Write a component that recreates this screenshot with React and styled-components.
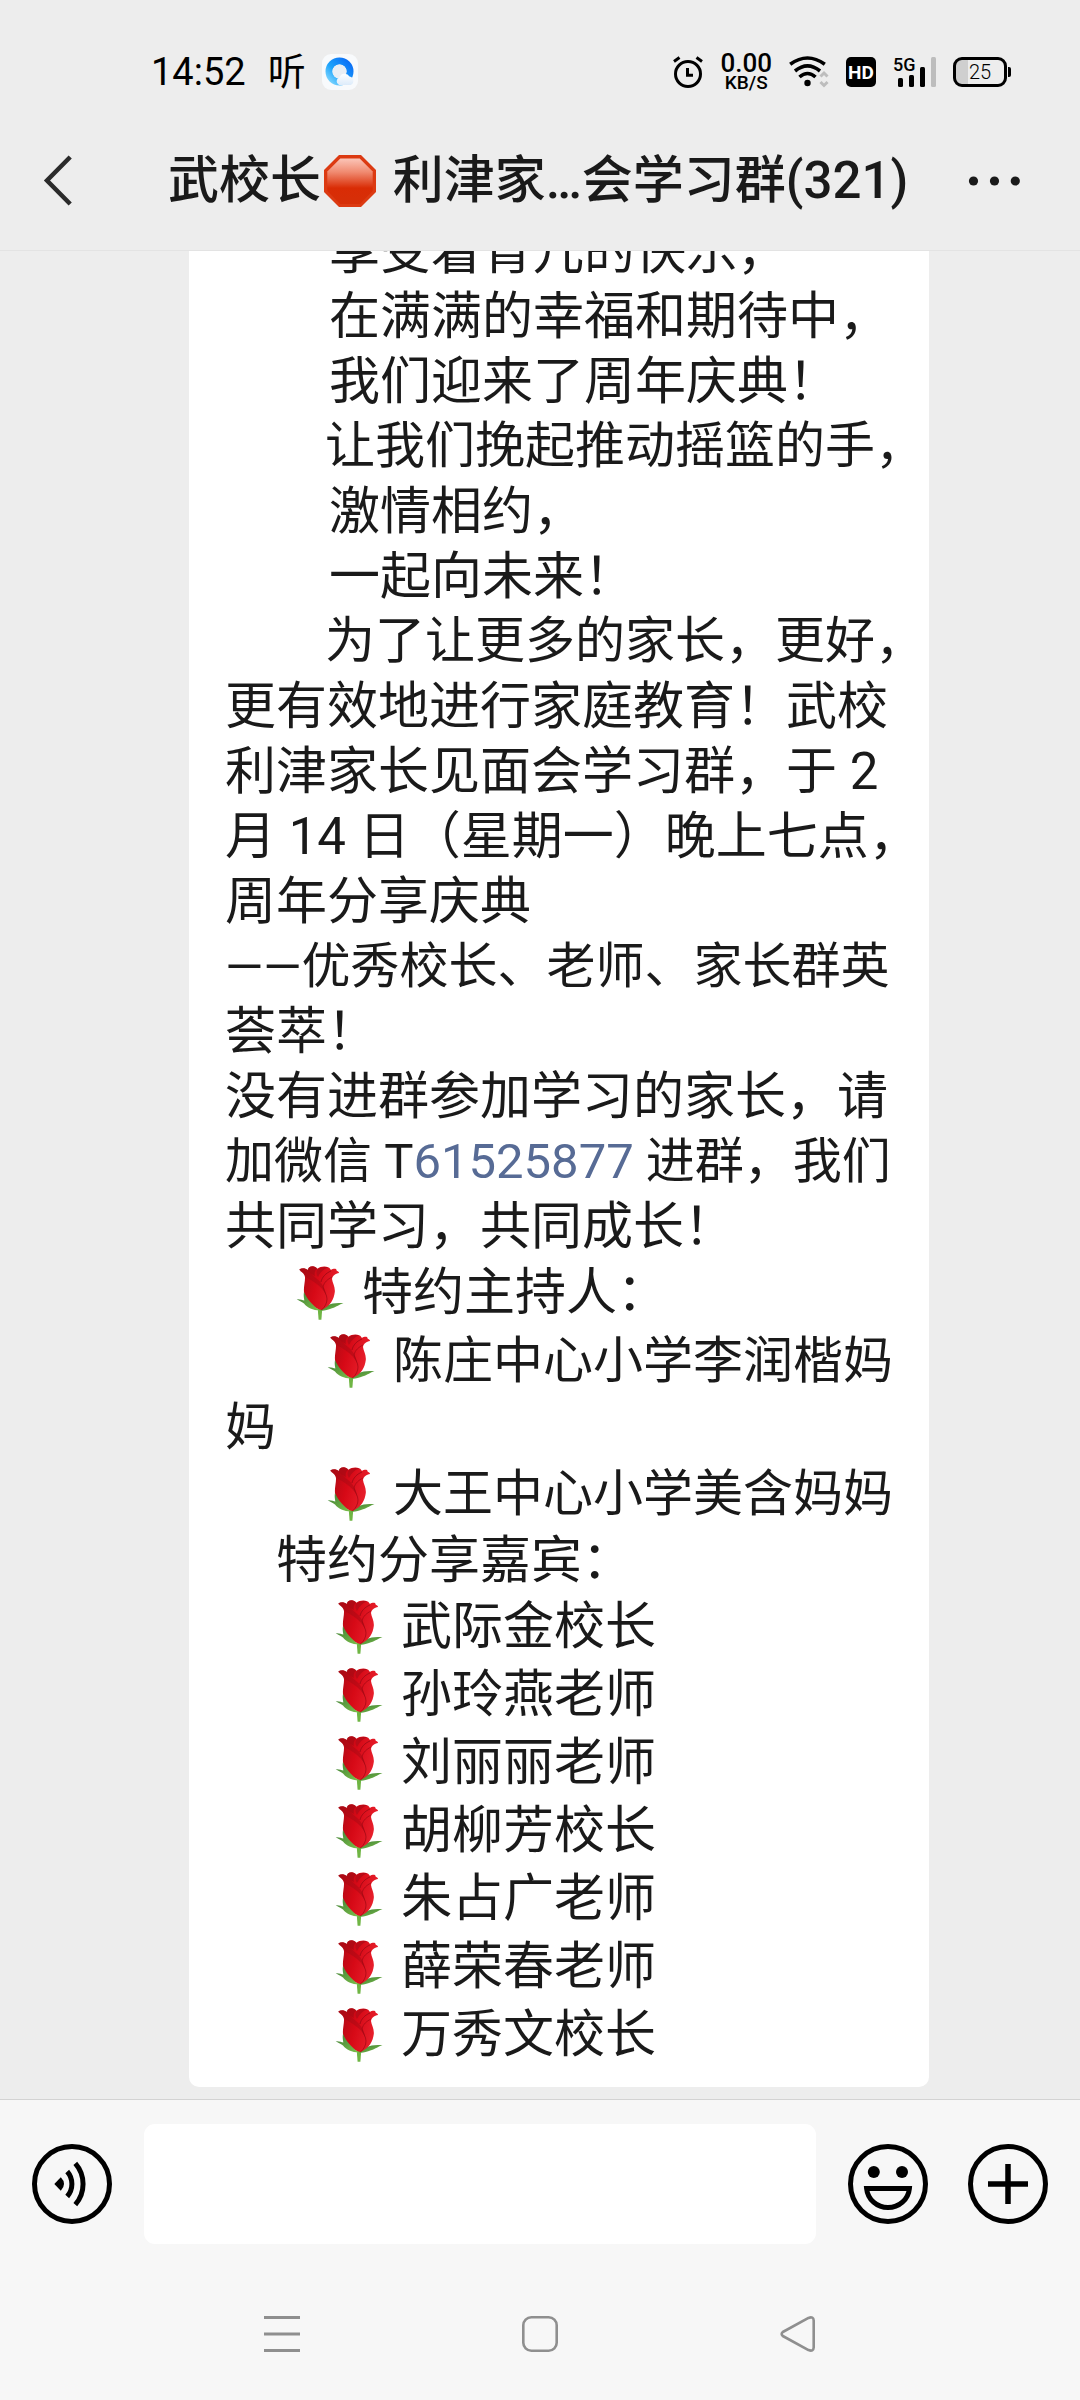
import { useState } from "react"
import styled, { createGlobalStyle } from "styled-components"

const GlobalStyle = createGlobalStyle`
  * {
    box-sizing: border-box;
  }
  body {
    margin: 0;
    background: #ededed;
    color: #1a1a1a;
    font-family: Roboto, "Noto Sans CJK SC", sans-serif;
  }
  button {
    display: flex;
    padding: 0;
    border: none;
    background: none;
    color: inherit;
    cursor: pointer;
  }
  svg {
    display: block;
  }
`

// Page
const Screen = styled.div`
  display: flex;
  flex-direction: column;
  height: 100vh;
`

// Status bar
const StatusBar = styled.div`
  flex: none;
  display: flex;
  justify-content: space-between;
  align-items: center;
  height: 111px;
  padding: 33px 69px 0 151px;
  color: #000;
`
const StatusLeft = styled.div`
  display: flex;
  align-items: center;
  gap: 16px;
`
const StatusRight = styled.div`
  display: flex;
  align-items: center;
  gap: 17px;
`
const Clock = styled.time`
  margin-right: 6px;
  font-size: 38px;
  line-height: 40px;
`
const ListenMark = styled.span`
  font-size: 38px;
  line-height: 40px;
`
const NetSpeed = styled.div`
  display: flex;
  flex-direction: column;
  align-items: center;
  font-weight: 500;
`
const SpeedValue = styled.span`
  font-size: 26px;
  line-height: 22px;
`
const SpeedUnit = styled.span`
  font-size: 19px;
  line-height: 18px;
`
const HdBadge = styled.span`
  display: flex;
  justify-content: center;
  align-items: center;
  width: 30px;
  height: 30px;
  border-radius: 5px;
  background: #000;
  color: #fff;
  font-size: 19px;
  font-weight: 700;
`
const Signal = styled.div`
  position: relative;

  span {
    position: absolute;
    top: 0;
    left: 0;
    font-size: 18px;
    line-height: 16px;
    font-weight: 500;
  }
`
const Battery = styled.div`
  display: flex;
  align-items: center;
  gap: 1px;

  &::after {
    content: '';
    width: 3px;
    height: 10px;
    border-radius: 0 2px 2px 0;
    background: #000;
  }
`
const BatteryBody = styled.div`
  display: flex;
  justify-content: center;
  align-items: center;
  width: 54px;
  height: 30px;
  border: 3px solid #000;
  border-radius: 9px;
  background: linear-gradient(to right, #cfcfcf 25%, transparent 25%);
  font-size: 20px;
  font-weight: 300;
`

// Title bar
const TitleBar = styled.header`
  flex: none;
  display: flex;
  align-items: center;
  height: 140px;
  padding: 0 60px 0 42px;
  border-bottom: 1px solid #e3e3e3;
`
const Title = styled.h1`
  flex: 1;
  display: flex;
  align-items: center;
  margin: 0 0 0 94px;
  font-size: 51px;
  line-height: 60px;
  font-weight: 500;
  white-space: pre;

  svg {
    margin: 0 4px 0 3px;
  }
`

// Messages
const Chat = styled.main`
  flex: 1;
  min-height: 0;
  display: flex;
  flex-direction: column;
  justify-content: flex-end;
  padding: 0 151px 12px 189px;
  overflow: hidden;
`
const Bubble = styled.article`
  flex: none;
  padding: 24px 0 18px 36px;
  border-radius: 10px;
  background: #fff;
`
const textSizes = { normal: 51, snug: 50, tight: 49 }
const Line = styled.p`
  display: flex;
  align-items: center;
  height: 65px;
  margin: 0;
  padding-left: ${(props) => props.$indent || 0}px;
  font-size: ${(props) => textSizes[props.$size || "normal"]}px;
  line-height: 65px;
  white-space: pre;
`
const RoseLine = styled(Line)`
  height: 68px;
  line-height: 68px;

  svg {
    margin-right: 18px;
  }
`
const NumberLink = styled.a`
  color: #576b95;
  text-decoration: none;
`

// Bottom
const Composer = styled.form`
  flex: none;
  display: flex;
  align-items: center;
  gap: 32px;
  padding: 24px 32px;
  border-top: 1px solid #d3d3d3;
  background: #f7f7f7;
  color: #000;
`
const MessageInput = styled.input`
  flex: 1;
  min-width: 0;
  height: 120px;
  padding: 0 24px;
  border: none;
  border-radius: 11px;
  outline: none;
  background: #fff;
  font: inherit;
  font-size: 51px;
`
const ComposerActions = styled.div`
  display: flex;
  gap: 40px;
`
const NavBar = styled.nav`
  flex: none;
  display: grid;
  grid-template-columns: repeat(3, 1fr);
  justify-items: center;
  align-items: center;
  height: 132px;
  padding: 0 153px;
  background: #f7f7f7;
  color: #8f8f8f;
`

const BrowserIcon = () => (
  <svg width="36" height="36" viewBox="0 0 36 36" aria-hidden="true">
    <defs>
      <linearGradient id="ring" x1="1" y1="0" x2="0" y2="1">
        <stop offset="0" stopColor="#0a6cf5" />
        <stop offset="0.6" stopColor="#1ea4fb" />
        <stop offset="1" stopColor="#7fd6ff" />
      </linearGradient>
      <linearGradient id="cloud" x1="0" y1="0" x2="0" y2="1">
        <stop offset="0" stopColor="#fff" />
        <stop offset="1" stopColor="#dcebfa" />
      </linearGradient>
    </defs>
    <rect width="36" height="36" rx="9" fill="#f8fafc" />
    <circle cx="17.5" cy="17.5" r="10.5" fill="none" stroke="url(#ring)" strokeWidth="7" />
    <circle cx="17.5" cy="17.5" r="7" fill="#e9eef4" />
    <path d="M17 31a4 4 0 0 1 .5-7.500a5.500 5.500 0 0 1 10-1a4.400 4.400 0 0 1 1 8.500z" fill="url(#cloud)" />
  </svg>
)

const AlarmIcon = () => (
  <svg width="30" height="32" viewBox="0 0 30 32" fill="none" stroke="currentColor" strokeWidth="3" aria-hidden="true">
    <circle cx="15" cy="18" r="12.500" />
    <path d="M14.500 12v7.300H20M1 5.500L6.500 1.500M29 5.500L23.500 1.500" />
  </svg>
)

const WifiIcon = () => (
  <svg width="40" height="32" viewBox="0 0 40 32" fill="none" stroke="currentColor" strokeWidth="3.6" aria-hidden="true">
    <path d="M1.200 8.300Q18.500-4.300 35.800 8.300M6 15Q18.500 4.800 31 15M10.500 21Q18.500 14 26.500 21" />
    <circle cx="18.500" cy="27" r="3.200" fill="currentColor" stroke="none" />
    <path d="M31.500 20.500L35 17l3.500 3.500M31.500 26L35 29.500l3.500-3.500" stroke="#bdbdbd" strokeWidth="3" />
  </svg>
)

const SignalIcon = () => (
  <svg width="43" height="30" viewBox="0 0 43 30" fill="currentColor" aria-hidden="true">
    <rect x="5" y="21" width="5" height="9" rx="1.500" />
    <rect x="16" y="18" width="5" height="12" rx="1.500" />
    <rect x="27" y="10" width="5" height="20" rx="1.500" />
    <rect x="38" y="0" width="5" height="30" rx="1.500" fill="#bdbdbd" />
  </svg>
)

const BackIcon = () => (
  <svg width="32" height="54" viewBox="0 0 32 54" fill="none" stroke="#2b2b2b" strokeWidth="4.5" aria-hidden="true">
    <path d="M28.200 3L5 26.500L28.200 50" />
  </svg>
)

const MoreIcon = () => (
  <svg width="54" height="54" viewBox="0 0 54 54" fill="currentColor" aria-hidden="true">
    <circle cx="7.500" cy="27" r="4.600" />
    <circle cx="28.500" cy="27" r="4.600" />
    <circle cx="49.300" cy="27" r="4.600" />
  </svg>
)

const StopSign = () => (
  <svg width="52" height="52" viewBox="0 0 52 52" role="img" aria-label="停">
    <defs>
      <linearGradient id="stop" x1="0" y1="0" x2="0" y2="1">
        <stop offset="0" stopColor="#fbc5b8" />
        <stop offset="0.3" stopColor="#f08a70" />
        <stop offset="0.650" stopColor="#d92c05" />
        <stop offset="1" stopColor="#d62f08" />
      </linearGradient>
    </defs>
    <path d="M15 0H37L52 15V37L37 52H15L0 37V15z" fill="#dc3a12" />
    <path d="M16.300 3.500H35.700L48.700 16.500V36L36 49H16L3.300 36V16.500z" fill="url(#stop)" />
  </svg>
)

const Rose = () => (
  <svg width="48" height="54" viewBox="0 0 48 54" role="img" aria-label="玫瑰">
    <defs>
      <linearGradient id="bloom" x1="0" y1="0" x2="1" y2="0.3">
        <stop offset="0" stopColor="#a80b15" />
        <stop offset="0.5" stopColor="#d60916" />
        <stop offset="1" stopColor="#e8202c" />
      </linearGradient>
      <linearGradient id="leaf" x1="0" y1="0" x2="1" y2="1">
        <stop offset="0" stopColor="#3f7f35" />
        <stop offset="1" stopColor="#7cc04a" />
      </linearGradient>
    </defs>
    <path d="M21.700 42h4.600l-.9 11.800h-2.800z" fill="#6fb544" />
    <path d="M24 44.500C29 39.500 36 36 47.500 37.300C43 38.300 41 41 36 42.300C31 44.500 27 45 24 44.500z" fill="url(#leaf)" />
    <path d="M9 11C8 6.500 5 6 3.300 3.500C6 1.500 9 2 12 4C12 1 15-.2 18 .5C20 1 20.500 2.200 21.500 2.800C24 .5 29 0 32 1.200C34 1.500 34 3 35 4C38 2 40.500 3 40.500 4C40.500 5.500 43 5 43 7C39.500 7.500 36.500 9.500 36 13C36.500 17 39.300 21 38.800 26C38 33 34.500 40 25.500 44C18 42.500 10.500 36 8.300 28C7 22 9.300 16 9 11z" fill="url(#bloom)" />
    <path d="M3.300 3.500C6 1.500 9 2 12 4C14 7 17 10 21 13C26 17 29 22 30 29C28 24 24 20 18 16C14 13 10 12 9 9C7 6 4 6 3.300 3.500z" fill="#a50914" opacity=".5" />
    <path d="M12 4C12 1 15-.2 18 .5C20 1 20.500 2.200 21.500 2.800C19 4 18 7 19 10C15 8 13 6 12 4z" fill="#a00a14" opacity=".6" />
    <path d="M22 3C26 1 30 1 32 1.200C28 3 24 6 22 11C20 8 20 5 22 3z" fill="#b70b17" />
    <path d="M36 11C32 13 28 16 27 21C28 25 31 29 31 33C31 37 29 41 25.500 44" fill="none" stroke="#9c0712" strokeWidth="1" opacity=".7" />
    <path d="M35 5C30 7 26 11 25 16" fill="none" stroke="#8f0812" strokeWidth="1" opacity=".7" />
    <path d="M8 26C11 33 16 39 24 44.500C17 44.500 11 41.500 8 37.500C5.500 35.500 3 35 .7 33.300C4 33 6.500 34 8.300 34.500C7.700 31 7.500 28.500 8 26z" fill="url(#leaf)" />
  </svg>
)

const VoiceIcon = () => (
  <svg width="80" height="80" viewBox="0 0 80 80" fill="none" stroke="currentColor" strokeWidth="5" aria-hidden="true">
    <circle cx="40" cy="40" r="37.500" />
    <path d="M22.300 40L28.800 33.300Q32 36.500 32 40T28.800 46.700z" fill="currentColor" stroke="none" />
    <path d="M35.200 27.500A19 19 0 0 1 35.200 52.500M43.300 19.300A31.500 31.500 0 0 1 43.300 60.700" />
  </svg>
)

const SmileIcon = () => (
  <svg width="80" height="80" viewBox="0 0 80 80" fill="none" stroke="currentColor" strokeWidth="5" aria-hidden="true">
    <circle cx="40" cy="40" r="37.500" />
    <circle cx="25.800" cy="28" r="6" fill="currentColor" stroke="none" />
    <circle cx="54" cy="28" r="6" fill="currentColor" stroke="none" />
    <path d="M18.600 44.400H61.400C60.300 55.500 51 63.600 40 63.600S19.700 55.500 18.600 44.400z" />
  </svg>
)

const PlusIcon = () => (
  <svg width="80" height="80" viewBox="0 0 80 80" fill="none" stroke="currentColor" strokeWidth="5" aria-hidden="true">
    <circle cx="40" cy="40" r="37.500" />
    <path d="M20 40H60M40 20V60" strokeWidth="5.500" />
  </svg>
)

const RecentsIcon = () => (
  <svg width="36" height="36" viewBox="0 0 36 36" stroke="currentColor" strokeWidth="3" aria-hidden="true">
    <path d="M0 1.500H36M0 18H36M0 34.500H36" />
  </svg>
)

const HomeIcon = () => (
  <svg width="36" height="36" viewBox="0 0 36 36" fill="none" stroke="currentColor" strokeWidth="2.600" aria-hidden="true">
    <rect x="1.300" y="1.300" width="33.400" height="33.400" rx="8" />
  </svg>
)

const NavBackIcon = () => (
  <svg width="36" height="36" viewBox="0 0 36 36" fill="none" stroke="currentColor" strokeWidth="2.600" strokeLinejoin="round" aria-hidden="true">
    <path d="M2.800 16L28.500 1.900Q33.500 .2 33.700 4.500V31.500Q33.500 35.800 28.500 34.100L2.800 20Q.5 18 2.800 16z" />
  </svg>
)

const guests = [
  "武际金校长",
  "孙玲燕老师",
  "刘丽丽老师",
  "胡柳芳校长",
  "朱占广老师",
  "薛荣春老师",
  "万秀文校长",
]

function Message() {
  return (
    <Bubble>
      <Line $indent={104}>享受着育儿的快乐，</Line>
      <Line $indent={104}>在满满的幸福和期待中，</Line>
      <Line $indent={104}>我们迎来了周年庆典！</Line>
      <Line $indent={100} $size="snug">让我们挽起推动摇篮的手，</Line>
      <Line $indent={104}>激情相约，</Line>
      <Line $indent={104}>一起向未来！</Line>
      <Line $indent={100} $size="snug">为了让更多的家长，更好，</Line>
      <Line>更有效地进行家庭教育！武校</Line>
      <Line>利津家长见面会学习群，于 2</Line>
      <Line>月 14 日（星期一）晚上七点，</Line>
      <Line>周年分享庆典</Line>
      <Line $size="tight">——优秀校长、老师、家长群英</Line>
      <Line>荟萃！</Line>
      <Line>没有进群参加学习的家长，请</Line>
      <Line $size="tight">
        加微信 T<NumberLink href="#61525877">61525877</NumberLink> 进群，我们
      </Line>
      <Line>共同学习，共同成长！</Line>
      <RoseLine $indent={71}><Rose />特约主持人：</RoseLine>
      <RoseLine $indent={102} $size="snug"><Rose />陈庄中心小学李润楷妈</RoseLine>
      <Line>妈</Line>
      <RoseLine $indent={102} $size="snug"><Rose />大王中心小学美含妈妈</RoseLine>
      <Line $indent={51}>特约分享嘉宾：</Line>
      {guests.map((guest) => (
        <RoseLine key={guest} $indent={110}><Rose />{guest}</RoseLine>
      ))}
    </Bubble>
  )
}

function App() {
  const [text, setText] = useState("")

  return (
    <>
      <GlobalStyle />
      <Screen>
        <StatusBar>
          <StatusLeft>
            <Clock>14:52</Clock>
            <ListenMark>听</ListenMark>
            <BrowserIcon />
          </StatusLeft>
          <StatusRight>
            <AlarmIcon />
            <NetSpeed>
              <SpeedValue>0.00</SpeedValue>
              <SpeedUnit>KB/S</SpeedUnit>
            </NetSpeed>
            <WifiIcon />
            <HdBadge>HD</HdBadge>
            <Signal>
              <span>5G</span>
              <SignalIcon />
            </Signal>
            <Battery>
              <BatteryBody>25</BatteryBody>
            </Battery>
          </StatusRight>
        </StatusBar>

        <TitleBar>
          <button type="button" aria-label="返回"><BackIcon /></button>
          <Title>武校长<StopSign /> 利津家…会学习群(321)</Title>
          <button type="button" aria-label="更多"><MoreIcon /></button>
        </TitleBar>

        <Chat>
          <Message />
        </Chat>

        <Composer onSubmit={(e) => e.preventDefault()}>
          <button type="button" aria-label="语音"><VoiceIcon /></button>
          <MessageInput
            type="text"
            aria-label="消息"
            value={text}
            onChange={(e) => setText(e.target.value)}
          />
          <ComposerActions>
            <button type="button" aria-label="表情"><SmileIcon /></button>
            <button type="button" aria-label="添加"><PlusIcon /></button>
          </ComposerActions>
        </Composer>

        <NavBar>
          <button type="button" aria-label="最近任务"><RecentsIcon /></button>
          <button type="button" aria-label="主屏幕"><HomeIcon /></button>
          <button type="button" aria-label="后退"><NavBackIcon /></button>
        </NavBar>
      </Screen>
    </>
  )
}

export default App
